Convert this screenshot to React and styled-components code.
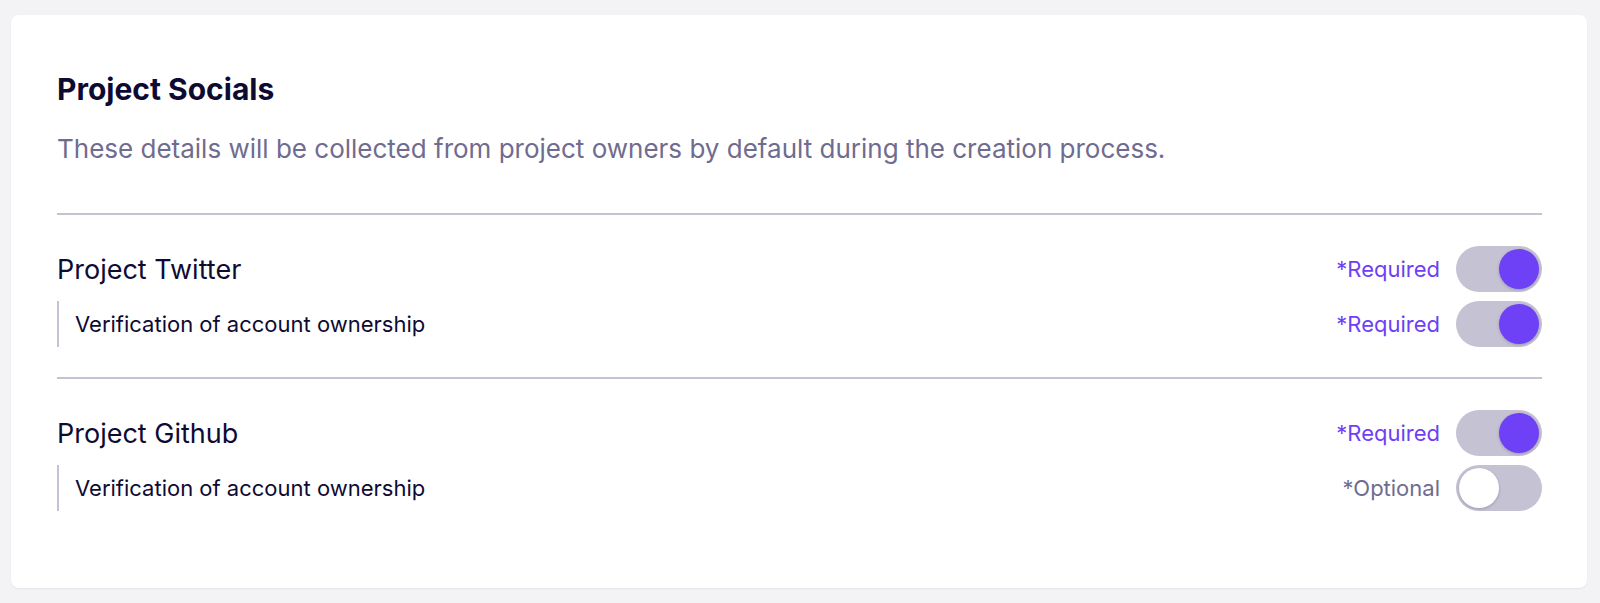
import styled, { createGlobalStyle } from "styled-components"

const GlobalStyle = createGlobalStyle`
  * { box-sizing: border-box; }
  body {
    margin: 0;
    background: #f3f3f5;
    font-family: Inter, "Noto Sans", sans-serif;
    color: #0e0b33;
  }
`

const Page = styled.div`
  padding: 15px 13px 18px 11px;
`

const Card = styled.section`
  background: #ffffff;
  border-radius: 8px;
  box-shadow: 0 1px 2px rgba(20, 16, 60, 0.06);
  padding: 56px 45px 46px 46px;
`

const Title = styled.h2`
  margin: 0;
  font-size: 30px;
  line-height: 36px;
  font-weight: 700;
  color: #0e0b33;
`

const Description = styled.p`
  margin: 25px 0 0;
  font-size: 26px;
  line-height: 34px;
  color: #6f6c8f;
`

const Divider = styled.hr`
  margin: ${(p) => p.$top || 0}px 0 0;
  border: 0;
  height: 2px;
  background: #c4c2d3;
`

const Group = styled.div`
  display: flex;
  flex-direction: column;
  gap: 9px;
  padding: 31px 0 ${(p) => (p.$last ? 31 : 30)}px;
`

const Row = styled.div`
  display: flex;
  align-items: center;
  justify-content: space-between;
  height: 46px;
  padding-left: ${(p) => (p.$nested ? "16px" : "0")};
  border-left: ${(p) => (p.$nested ? "2px solid #c4c2d3" : "0")};
`

const Label = styled.span`
  font-size: ${(p) => (p.$nested ? "22px" : "27px")};
  color: #0e0b33;
`

const Controls = styled.div`
  display: flex;
  align-items: center;
  gap: 16px;
`

const Status = styled.span`
  font-size: 22px;
  color: ${(p) => (p.$required ? "#6e3ff5" : "#6f6c8f")};
`

const Track = styled.span`
  position: relative;
  display: inline-block;
  width: 86px;
  height: 46px;
  border-radius: 23px;
  background: #c4c2d3;
`

const Knob = styled.span`
  position: absolute;
  top: 3px;
  left: ${(p) => (p.$on ? "43px" : "3px")};
  width: 40px;
  height: 40px;
  border-radius: 50%;
  background: ${(p) => (p.$on ? "#6e40f6" : "#ffffff")};
  box-shadow: 0 1px 3px rgba(40, 30, 80, 0.25);
`

function Toggle({ on }) {
  return (
    <Track>
      <Knob $on={on} />
    </Track>
  )
}

function SettingRow({ label, nested, required }) {
  return (
    <Row $nested={nested}>
      <Label $nested={nested}>{label}</Label>
      <Controls>
        <Status $required={required}>{required ? "*Required" : "*Optional"}</Status>
        <Toggle on={required} />
      </Controls>
    </Row>
  )
}

const socials = [
  { name: "Project Twitter", verifyRequired: true },
  { name: "Project Github", verifyRequired: false },
]

export default function App() {
  return (
    <>
      <GlobalStyle />
      <Page>
        <Card>
          <Title>Project Socials</Title>
          <Description>
            These details will be collected from project owners by default during the creation process.
          </Description>
          <Divider $top={47} />
          {socials.map((s, i) => (
            <div key={s.name}>
              <Group $last={i === socials.length - 1}>
                <SettingRow label={s.name} required />
                <SettingRow label="Verification of account ownership" nested required={s.verifyRequired} />
              </Group>
              {i < socials.length - 1 && <Divider />}
            </div>
          ))}
        </Card>
      </Page>
    </>
  )
}
